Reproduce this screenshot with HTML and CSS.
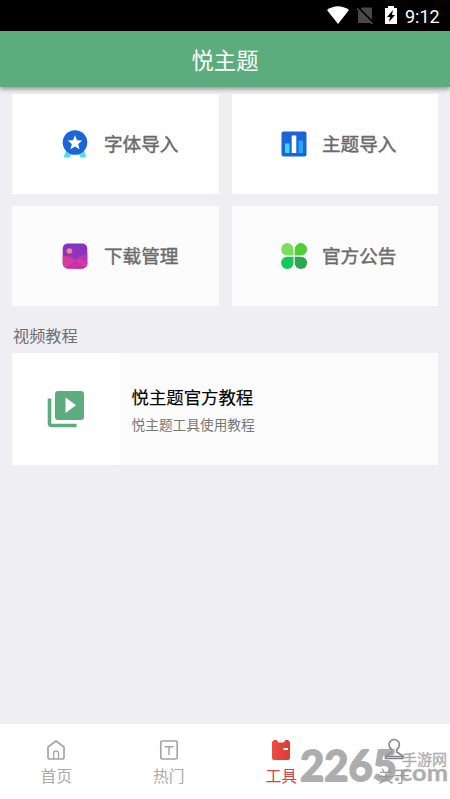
FILE: index.html
```html
<!DOCTYPE html>
<html lang="zh-CN">
<head>
<meta charset="utf-8">
<title>悦主题</title>
<link rel="stylesheet" href="styles.css">
</head>
<body>
<div class="status">
  <svg class="status-icons" width="72" height="20" viewBox="0 0 72 20">
    <path fill="#fff" d="M0 4Q11-3.500 22 4L11 18Z"/>
    <path fill="#484848" d="M31 6L35 1.500H45V17H31Z"/>
    <path stroke="#000" stroke-width="3" d="M31 2L47 18"/>
    <path stroke="#555" stroke-width="1.400" d="M30 2.500L45.500 18"/>
    <path fill="#fff" d="M58 2h3V0h6v2h3v16H58Z"/>
    <path fill="#000" d="M66 4l-6 7h3l-1 5 6-7h-3Z"/>
  </svg>
  <span class="clock">9:12</span>
</div>
<header class="bar">悦主题</header>
<main class="content">
  <section class="grid">
    <div class="card white">
      <svg class="icon" width="28" height="30" viewBox="0 0 28 30">
        <path fill="#57dbe9" d="M6 19L2.500 28.500H8.500L11 24H17L19.500 28.500H25.500L22 19Z"/>
        <circle cx="14" cy="13.500" r="12.300" fill="#1b65d8"/>
        <path fill="#fff" d="M14 6.300l2 4.900 5.200.4-4 3.400 1.300 5.200-4.500-2.800-4.500 2.800 1.300-5.200-4-3.400 5.200-.4Z"/>
      </svg>
      <span>字体导入</span>
    </div>
    <div class="card white">
      <svg class="icon" width="28" height="30" viewBox="0 0 28 30">
        <rect x="1.500" y="2.500" width="25" height="25" rx="2" fill="#1b65d8"/>
        <path fill="#42d7fa" d="M5 14.500h4.500v9.500H5Z"/>
        <path fill="#fff" d="M11.700 6.500h4.600v17.500h-4.600Z"/>
        <path fill="#2aa5fb" d="M18.500 11.500H23v12.500h-4.500Z"/>
      </svg>
      <span>主题导入</span>
    </div>
    <div class="card">
      <svg class="icon" width="28" height="30" viewBox="0 0 28 30">
        <defs>
          <linearGradient id="sky" x1="0" y1="0" x2="0" y2="1"><stop offset="0" stop-color="#7a35c6"/><stop offset="1" stop-color="#ae30b5"/></linearGradient>
          <linearGradient id="hill" x1="0" y1="0" x2="1" y2="1"><stop offset="0" stop-color="#dc3c8d"/><stop offset="1" stop-color="#cc38b6"/></linearGradient>
          <clipPath id="tile"><rect x="1.700" y="2.500" width="24.600" height="25" rx="5"/></clipPath>
        </defs>
        <g clip-path="url(#tile)">
          <path fill="url(#sky)" d="M0 0h28v30H0Z"/>
          <path fill="#b736b9" d="M13 20Q20 14 22 14T28 12V30H13Z"/>
          <path fill="url(#hill)" d="M0 16Q8 13 14 20Q20 15 28 23V30H0Z"/>
          <path fill="#c52aae" d="M4 30Q12 17 19 23T27 30Z" opacity=".65"/>
          <circle cx="8.500" cy="10" r="2.800" fill="#e98c79"/>
        </g>
      </svg>
      <span>下载管理</span>
    </div>
    <div class="card">
      <svg class="icon" width="28" height="30" viewBox="0 0 28 30">
        <path fill="#7bdc5d" d="M13.500 14.500H7.300A6.200 6.200 0 1 1 13.500 8.300Z"/>
        <path fill="#52cd35" d="M14.700 14.500V8.300a6.200 6.200 0 1 1 6.200 6.200Z"/>
        <path fill="#16c75b" d="M13.500 15.700v6.200a6.200 6.200 0 1 1-6.200-6.200Z"/>
        <path fill="#29a850" d="M14.700 15.700h6.200a6.200 6.200 0 1 1-6.200 6.200Z"/>
      </svg>
      <span>官方公告</span>
    </div>
  </section>
  <h2 class="section-title">视频教程</h2>
  <article class="video">
    <div class="thumb">
      <svg width="38" height="38" viewBox="0 0 38 38">
        <path fill="#5dac7d" d="M11 1H34a3 3 0 0 1 3 3V27a3 3 0 0 1-3 3H11a3 3 0 0 1-3-3V4a3 3 0 0 1 3-3ZM18.500 7.500V23L29 15.300Z"/>
        <path fill="none" stroke="#5dac7d" stroke-width="3.600" d="M2.500 8.500V33.500Q2.500 35.500 4.500 35.500H29.500"/>
      </svg>
    </div>
    <div class="video-text">
      <h3>悦主题官方教程</h3>
      <p>悦主题工具使用教程</p>
    </div>
  </article>
</main>
<nav class="tabs">
  <a class="tab">
    <svg width="22" height="24" viewBox="0 0 22 24" fill="none" stroke="#a5a5a5" stroke-width="1.700" stroke-linejoin="round">
      <path d="M3 9L11 3L19 9V19Q19 21 17 21H5Q3 21 3 19Z"/>
      <path stroke-width="1.300" d="M8.700 21V14.500Q8.700 13 11 13T13.500 14.500V21"/>
    </svg>
    <span>首页</span>
  </a>
  <a class="tab">
    <svg width="22" height="24" viewBox="0 0 22 24" fill="none" stroke="#a5a5a5" stroke-width="1.700">
      <rect x="2.800" y="3" width="16.400" height="18" rx="1.500"/>
      <path stroke-width="1.500" d="M6.500 8.700H15.500M11 8.700V17"/>
    </svg>
    <span>热门</span>
  </a>
  <a class="tab active">
    <svg width="22" height="24" viewBox="0 0 22 24">
      <defs><linearGradient id="ticket" x1="0" x2="1"><stop stop-color="#eb5043"/><stop offset="1" stop-color="#d93c33"/></linearGradient></defs>
      <path fill="url(#ticket)" d="M4 2H6.500L8.500 4.500H13.500L15.500 2H18L20 4V20Q20 22 18 22H4Q2 22 2 20V4Z"/>
      <path fill="#fff" d="M13.500 10H18v2H13.500Z"/>
    </svg>
    <span>工具</span>
  </a>
  <a class="tab about">
    <svg width="22" height="24" viewBox="0 0 22 24" fill="none" stroke="#858585" stroke-width="1.600" stroke-linejoin="round">
      <path d="M8.800 14V11.500Q6 9.500 6 6.500A5.200 5 0 0 1 16.400 6.500Q16.400 9.500 13.700 11.500V14L20 18V20.500H2.500V18Z"/>
      <path d="M3 18.500H20"/>
    </svg>
    <span>关于</span>
  </a>
</nav>
<svg class="watermark" width="152" height="59" viewBox="0 0 152 59">
  <text class="digits" x="2" y="41" textLength="97" lengthAdjust="spacingAndGlyphs">2265</text>
  <text class="domain" x="96" y="41" textLength="54" lengthAdjust="spacingAndGlyphs">.com</text>
  <text class="site" x="104" y="25" textLength="45">手游网</text>
</svg>
</body>
</html>
```
FILE: styles.css
```css
* { box-sizing: border-box; }
body {
  margin: 0;
  height: 799px;
  display: flex;
  flex-direction: column;
  overflow: hidden;
  background: #eeeef3;
  font-family: Roboto, "Noto Sans CJK SC", sans-serif;
}
.status {
  height: 31px;
  flex: none;
  display: flex;
  align-items: center;
  justify-content: flex-end;
  gap: 6px;
  padding: 0 10px 0 0;
  background: #000;
  color: #fff;
}
.status-icons { margin-top: 1px; }
.clock { width: 35px; font-size: 18px; line-height: 30px; white-space: nowrap; padding-top: 2px; }
.bar {
  height: 56px;
  flex: none;
  background: #5dac7d;
  color: #fff;
  text-align: center;
  font-size: 22.300px;
  line-height: 60px;
  box-shadow: 0 2px 5px rgba(0, 0, 0, .4);
  z-index: 1;
}
.content { flex: 1; padding: 7px 12px 0; }
.grid {
  display: grid;
  grid-template-columns: 206.500px 206px;
  grid-auto-rows: 99.500px;
  gap: 12.500px 13px;
}
.card {
  display: flex;
  align-items: center;
  gap: 15px;
  padding-left: 49px;
  background: #fcfcfc;
  color: #6b6b6b;
  font-size: 18.600px;
  line-height: 28px;
  font-weight: 400;
  -webkit-text-stroke: .45px;
}
.card span { padding-top: 2px; }
.card:nth-child(even) { padding-left: 48px; gap: 14.500px; }
.white { background: #fff; }
.icon { flex: none; }
.section-title { margin: 19px 0 5px 1px; height: 23px; line-height: 23px; font-size: 16.200px; font-weight: 400; color: #6e6e72; }
.video { height: 112px; display: flex; background: #fcfcfc; }
.thumb { width: 107px; background: #fff; display: flex; align-items: center; justify-content: center; }
.video-text { padding: 32px 0 0 12.500px; }
.video h3 { margin: 0; font-size: 17.400px; line-height: 26px; font-weight: 400; color: #000; -webkit-text-stroke: .15px; }
.video p { margin: 4px 0 0; font-size: 13.700px; line-height: 20px; color: #777; }
.tabs { height: 75px; flex: none; display: grid; grid-template-columns: repeat(4, 1fr); background: #fff; }
.tab {
  display: flex;
  flex-direction: column;
  align-items: center;
  padding-top: 14px;
  font-size: 15.800px;
  line-height: 24px;
  color: #aaa;
}
.tab span { margin-top: 3px; }
.active { color: #cf4544; }
.about { color: #999; }
.watermark { position: absolute; left: 298px; top: 740px; fill: #999; opacity: .8; }
.digits { font: 700 42px Lato, sans-serif; stroke: #999; stroke-width: 1.800px; stroke-linejoin: round; }
.domain { font: 700 22px Lato, sans-serif; stroke: #999; stroke-width: .3px; }
.site { font: 400 15px "Noto Sans CJK SC", sans-serif; stroke: #999; stroke-width: .3px; }
```
